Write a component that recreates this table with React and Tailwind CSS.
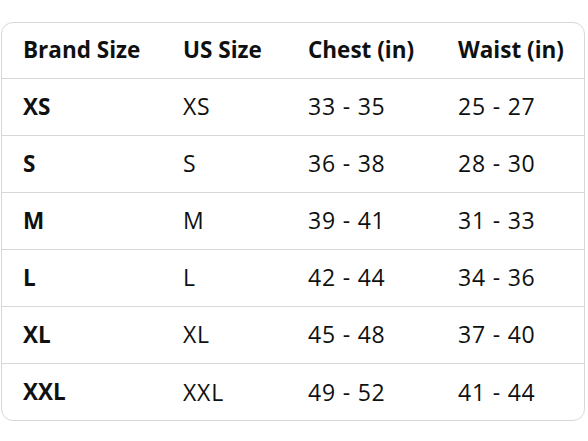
import React from 'react';

const rows = [
  ['XS', 'XS', '33 - 35', '25 - 27'],
  ['S', 'S', '36 - 38', '28 - 30'],
  ['M', 'M', '39 - 41', '31 - 33'],
  ['L', 'L', '42 - 44', '34 - 36'],
  ['XL', 'XL', '45 - 48', '37 - 40'],
  ['XXL', 'XXL', '49 - 52', '41 - 44'],
];

const headers = ['Brand Size', 'US Size', 'Chest (in)', 'Waist (in)'];

export default function App() {
  return (
    <div className="w-[588px] h-[441px] bg-white pt-[22px] pl-px pr-[3px]" style={{ fontFamily: '"Open Sans", Arial, sans-serif' }}>
      <div className="rounded-xl border border-[#d5d9d9] overflow-hidden">
        <table className="w-full border-collapse text-[22.5px] text-[#0f1111]">
          <thead>
            <tr className="h-[55px]">
              {headers.map((h, i) => (
                <th
                  key={h}
                  className={`text-left font-bold p-0 ${i === 0 ? 'pl-[21px] w-[181px]' : i === 1 ? 'w-[125px]' : i === 2 ? 'w-[150px]' : ''}`}
                >
                  {h}
                </th>
              ))}
            </tr>
          </thead>
          <tbody>
            {rows.map((r) => (
              <tr key={r[0]} className="h-[57px] border-t border-[#d5d9d9]">
                {r.map((c, i) => (
                  <td
                    key={i}
                    className={`p-0 ${i === 0 ? 'pl-[21px] font-bold' : 'text-[23px] tracking-[0.8px]'}`}
                  >
                    {c}
                  </td>
                ))}
              </tr>
            ))}
          </tbody>
        </table>
      </div>
    </div>
  );
}
